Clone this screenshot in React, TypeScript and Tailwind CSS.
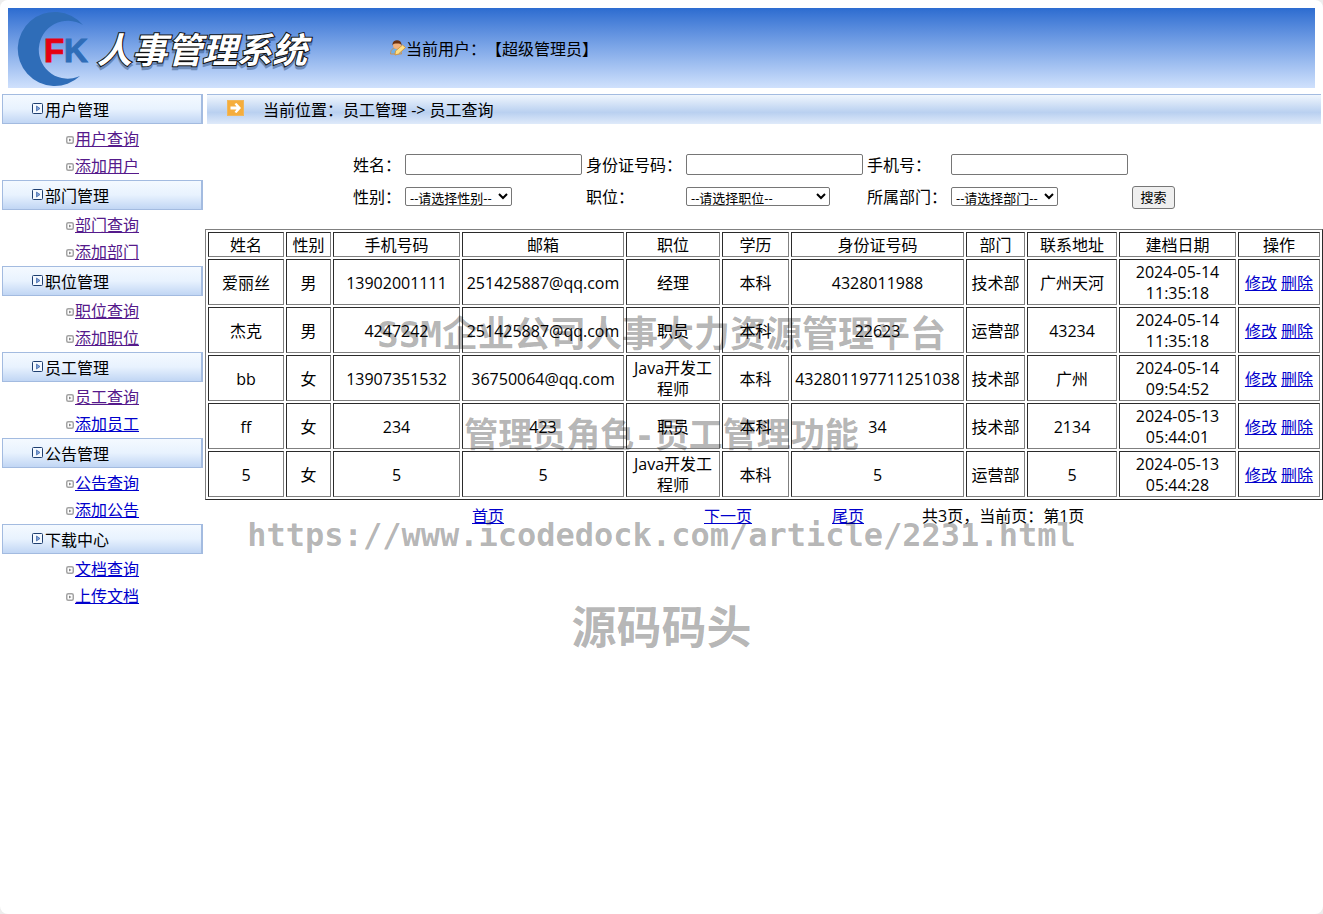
import type { ReactNode } from "react";

const MENU = [
  { title: "用户管理", links: ["用户查询", "添加用户"], visited: [true, true] },
  { title: "部门管理", links: ["部门查询", "添加部门"], visited: [true, true] },
  { title: "职位管理", links: ["职位查询", "添加职位"], visited: [true, true] },
  { title: "员工管理", links: ["员工查询", "添加员工"], visited: [true, false] },
  { title: "公告管理", links: ["公告查询", "添加公告"], visited: [false, false] },
  { title: "下载中心", links: ["文档查询", "上传文档"], visited: [false, false] },
];

const COLUMNS = [
  { label: "姓名", width: "w-[76px]" },
  { label: "性别", width: "w-[45px]" },
  { label: "手机号码", width: "w-[127px]" },
  { label: "邮箱", width: "w-[162px]" },
  { label: "职位", width: "w-[94px]" },
  { label: "学历", width: "w-[67px]" },
  { label: "身份证号码", width: "w-[173px]" },
  { label: "部门", width: "w-[59px]" },
  { label: "联系地址", width: "w-[90px]" },
  { label: "建档日期", width: "w-[117px]" },
  { label: "操作", width: "w-[82px]" },
];

const EMPLOYEES = [
  ["爱丽丝", "男", "13902001111", "251425887@qq.com", "经理", "本科", "4328011988", "技术部", "广州天河", "2024-05-14 11:35:18"],
  ["杰克", "男", "4247242", "251425887@qq.com", "职员", "本科", "22623", "运营部", "43234", "2024-05-14 11:35:18"],
  ["bb", "女", "13907351532", "36750064@qq.com", "Java开发工程师", "本科", "432801197711251038", "技术部", "广州", "2024-05-14 09:54:52"],
  ["ff", "女", "234", "423", "职员", "本科", "34", "技术部", "2134", "2024-05-13 05:44:01"],
  ["5", "女", "5", "5", "Java开发工程师", "本科", "5", "运营部", "5", "2024-05-13 05:44:28"],
];

const CELL = "border border-t-[#2b2b2b] border-l-[#2b2b2b] border-r-[#808080] border-b-[#808080] px-px pt-[2px] pb-0";
const FIELD = "mb-px h-[21px] w-[177px] rounded-[2px] border border-[#767676] bg-white px-1 text-[13px]";
const SELECT = "mb-[2px] h-[19px] rounded-[2px] border border-[#767676] bg-white text-[13px] leading-4";

function Logo() {
  return (
    <svg className="h-20 w-[310px]" viewBox="0 0 310 80" role="img" aria-label="FK 人事管理系统">
      <path d="M75 17A37 37 0 1 0 72 68A29 29 0 1 1 75 17Z" fill="#2f6db8" />
      <text x="36" y="54" fontFamily="Liberation Sans, Arial, sans-serif" fontSize="33" fontWeight="bold" fill="#e60012" stroke="#e60012">F</text>
      <text x="56" y="54" fontFamily="Liberation Sans, Arial, sans-serif" fontSize="33" fontWeight="bold" fill="#2f6db8" stroke="#2f6db8">K</text>
      <g
        fontFamily="Noto Sans CJK SC, sans-serif"
        fontSize="35"
        fontStyle="italic"
        fontWeight="bold"
      >
        <text x="89" y="58" fill="#1c3a66" stroke="#1c3a66" strokeWidth="2" opacity="0.4">人事管理系统</text>
        <text x="89" y="55" fill="#fff" stroke="#111" strokeWidth="2" paintOrder="stroke">人事管理系统</text>
      </g>
    </svg>
  );
}

function UserIcon() {
  return (
    <svg className="mb-[2px] size-4" viewBox="0 0 16 16" aria-hidden="true">
      <path d="M0.5 14c0-4 2-6 5-6s6 2 6 6z" fill="#6fb0e8" stroke="#d98b3a" strokeWidth="0.8" />
      <circle cx="7" cy="5" r="4" fill="#f2b27c" />
      <path d="M2.5 5.5c-1-7 10-7 9 0-1-2-2-2-4.5-2s-3.5 0-4.5 2z" fill="#6b3212" />
      <path d="M5 15l0.5-4 7-6 3 2.5-7 6.5z" fill="#ffdf85" stroke="#d08f30" strokeWidth="0.8" />
    </svg>
  );
}

function SectionIcon() {
  return (
    <svg className="mb-[2px] h-[11px] w-[11px]" viewBox="0 0 11 11" aria-hidden="true">
      <rect x="0.5" y="0.5" width="10" height="10" rx="1" fill="#f4f9ff" stroke="#1f3f70" />
      <path d="M4.5 3v5L8 5.5z" fill="#7a9fd8" stroke="#3c62a0" strokeWidth="0.7" />
    </svg>
  );
}

function BulletIcon() {
  return (
    <svg className="mt-px size-2" viewBox="0 0 8 8" aria-hidden="true">
      <rect x="0.75" y="0.75" width="6.5" height="6.5" rx="1.5" fill="#fff" stroke="#a3a3a3" strokeWidth="1.5" />
      <path d="M3 2.5v3L5.5 4z" fill="#888" />
    </svg>
  );
}

function ArrowIcon() {
  return (
    <svg className="mb-[3px] h-4 w-[17px]" viewBox="0 0 17 16" aria-hidden="true">
      <rect x="0.5" y="0.5" width="16" height="15" fill="#f5ad3c" stroke="#f0b75c" />
      <path d="M3.5 6.5h6L7.5 4l2-1L14 8l-4.5 5-2-1 2-2.5h-6z" fill="#fff" />
    </svg>
  );
}

function Link({ children, visited = false }: { children: ReactNode; visited?: boolean }) {
  return (
    <a href="#" className={`underline ${visited ? "text-[#551a8b]" : "text-[#0000cc]"}`}>
      {children}
    </a>
  );
}

function Sidebar() {
  return (
    <nav className="w-[201px] shrink-0">
      {MENU.map((section) => (
        <section key={section.title}>
          <h2 className="flex h-[30px] items-center gap-[2px] border border-r-2 border-[#a3bbe0] bg-linear-to-b from-[#f4f9ff] via-[#e8f2fe] to-[#c1d6f4] pl-[29px]">
            <SectionIcon />
            <span className="pt-[2px]">{section.title}</span>
          </h2>
          <ul className="pt-[2px] pl-16">
            {section.links.map((label, i) => (
              <li key={label} className="flex h-[27px] items-center gap-px">
                <BulletIcon />
                <Link visited={section.visited[i]}>{label}</Link>
              </li>
            ))}
          </ul>
        </section>
      ))}
    </nav>
  );
}

function SearchForm() {
  return (
    <form
      className="grid grid-cols-[52px_181px_100px_181px_84px_181px_auto] items-center justify-start gap-y-[10px] pt-[30px] pl-[148px]"
      onSubmit={(e) => e.preventDefault()}
    >
      <label htmlFor="name" className="pt-px">姓名：</label>
      <input id="name" className={FIELD} />
      <label htmlFor="card" className="pt-px">身份证号码：</label>
      <input id="card" className={FIELD} />
      <label htmlFor="phone" className="pt-px">手机号：</label>
      <input id="phone" className={FIELD} />
      <span />
      <label htmlFor="sex">性别：</label>
      <select id="sex" className={`${SELECT} w-[107px]`}>
        <option>--请选择性别--</option>
      </select>
      <label htmlFor="job">职位：</label>
      <select id="job" className={`${SELECT} w-36`}>
        <option>--请选择职位--</option>
      </select>
      <label htmlFor="dept">所属部门：</label>
      <select id="dept" className={`${SELECT} w-[107px]`}>
        <option>--请选择部门--</option>
      </select>
      <button type="submit" className="h-[23px] w-[43px] rounded-[3px] border border-[#767676] bg-[#efefef] pb-[2px] text-[13px] leading-4">
        搜索
      </button>
    </form>
  );
}

function EmployeeTable() {
  return (
    <table className="mt-5 w-full table-fixed border-separate border-spacing-[2px] border border-t-[#808080] border-l-[#808080] border-r-[#2b2b2b] border-b-[#2b2b2b] text-center">
      <thead>
        <tr>
          {COLUMNS.map((col) => (
            <th key={col.label} className={`${CELL} ${col.width} font-normal`}>
              {col.label}
            </th>
          ))}
        </tr>
      </thead>
      <tbody>
        {EMPLOYEES.map((row, r) => (
          <tr key={r} className="h-[46px]">
            {row.map((value, c) => (
              <td key={c} className={CELL}>
                {value}
              </td>
            ))}
            <td className={`${CELL} whitespace-nowrap`}>
              <Link>修改</Link> <Link>删除</Link>
            </td>
          </tr>
        ))}
      </tbody>
    </table>
  );
}

function Watermark() {
  return (
    <div className="pointer-events-none absolute inset-x-0 top-[310px] flex flex-col items-center font-['DejaVu_Sans_Mono','Noto_Sans_CJK_SC',monospace] font-bold whitespace-nowrap text-black/30">
      <p className="text-[36px] leading-[50px]">SSM企业公司人事大力资源管理平台</p>
      <p className="mt-[50px] text-[34px] leading-[50px]">管理员角色-员工管理功能</p>
      <p className="mt-[50px] text-[32px] leading-[50px]">https://www.icodedock.com/article/2231.html</p>
      <p className="mt-11 text-[45px] leading-[50px]">源码码头</p>
    </div>
  );
}

export default function App() {
  return (
    <div className="bg-[#ededed]">
      <div className="relative min-h-screen rounded-lg bg-white font-['Open_Sans','Noto_Sans_CJK_SC',sans-serif] text-[16px] leading-[21px] text-black [text-spacing-trim:space-all]">
        <header className="px-2 pt-2">
          <div className="flex h-20 items-center bg-linear-to-b from-[#2c6cd0] to-[#d0e1fc]">
            <Logo />
            <div className="ml-[72px] flex items-center pt-[2px]">
              <UserIcon />
              <span>当前用户：【超级管理员】</span>
            </div>
          </div>
        </header>
        <div className="flex gap-[2px] pt-[6px] pl-[2px]">
          <Sidebar />
          <main className="min-w-0 flex-1">
            <div className="mx-[2px] flex h-[30px] items-center border-t border-[#a3bbe0] bg-linear-to-b from-[#f0f6fd] via-[#b9d0f0] via-60% to-[#dfeafa] pl-5">
              <ArrowIcon />
              <span className="pt-[2px] pl-[19px]">当前位置：员工管理 -&gt; 员工查询</span>
            </div>
            <SearchForm />
            <EmployeeTable />
            <div className="flex pt-[6px] pl-[267px]">
              <div className="w-[232px]">
                <Link>首页</Link>
              </div>
              <div className="w-32">
                <Link>下一页</Link>
              </div>
              <div className="w-[90px]">
                <Link>尾页</Link>
              </div>
              <span>共3页，当前页：第1页</span>
            </div>
          </main>
        </div>
        <Watermark />
      </div>
    </div>
  );
}
